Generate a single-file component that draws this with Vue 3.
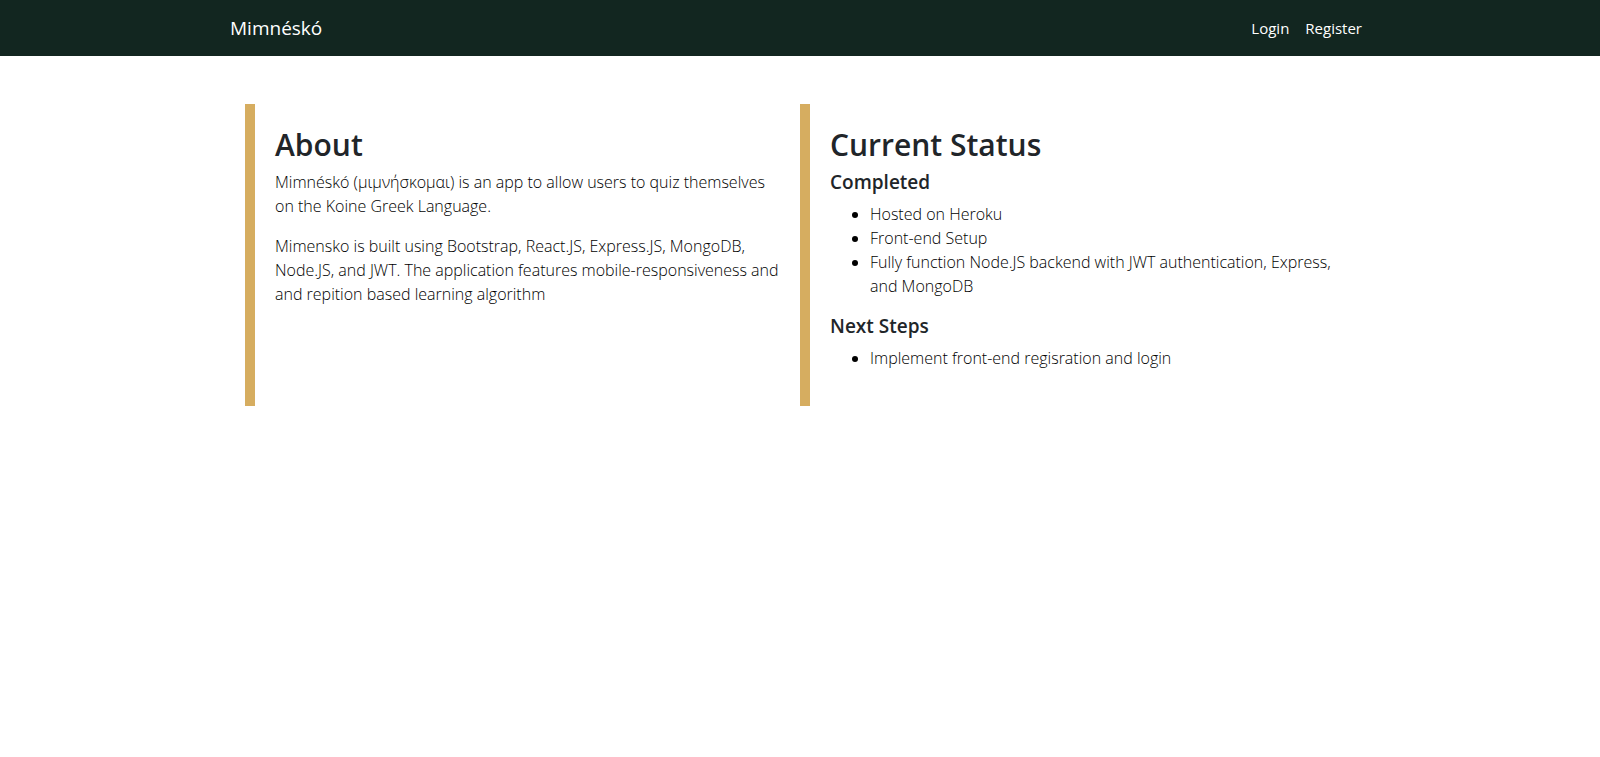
<script setup>
const completed = [
  'Hosted on Heroku',
  'Front-end Setup',
  'Fully function Node.JS backend with JWT authentication, Express, and MongoDB',
]
const nextSteps = ['Implement front-end regisration and login']
</script>

<template>
  <div class="page">
    <nav class="navbar">
      <div class="container bar">
        <a class="brand" href="#">Mimnéskó</a>
        <div class="links">
          <a href="#login">Login</a>
          <a href="#register">Register</a>
        </div>
      </div>
    </nav>
    <main class="container content">
      <section class="panel">
        <h2>About</h2>
        <p>Mimnéskó (μιμνήσκομαι) is an app to allow users to quiz themselves on the Koine Greek Language.</p>
        <p>Mimensko is built using Bootstrap, React.JS, Express.JS, MongoDB, Node.JS, and JWT. The application features mobile-responsiveness and and repition based learning algorithm</p>
      </section>
      <section class="panel">
        <h2>Current Status</h2>
        <h5>Completed</h5>
        <ul>
          <li v-for="item in completed" :key="item">{{ item }}</li>
        </ul>
        <h5>Next Steps</h5>
        <ul>
          <li v-for="item in nextSteps" :key="item">{{ item }}</li>
        </ul>
      </section>
    </main>
  </div>
</template>

<style>
body {
  margin: 0;
  background: #fff;
}
</style>

<style scoped>
.page {
  font-family: "Segoe UI", "Open Sans", "Noto Sans", sans-serif;
  font-size: 16px;
  font-weight: 300;
  line-height: 24px;
  color: #000;
}
.container {
  box-sizing: border-box;
  max-width: 1140px;
  margin: 0 auto;
}
.navbar {
  background: #122620;
  padding: 8px 16px;
}
.bar {
  display: flex;
  align-items: center;
  justify-content: space-between;
}
.navbar a {
  color: #fff;
  font-weight: 400;
  text-decoration: none;
}
.brand {
  font-size: 19px;
  line-height: 30px;
  padding: 5px 0;
}
.links {
  display: flex;
  font-size: 15px;
}
.links a {
  padding: 8px;
}
.content {
  display: grid;
  grid-template-columns: 1fr 1fr;
  margin-top: 48px;
  padding: 0 15px;
}
.panel {
  border-left: 10px solid #d6ad60;
  padding: 20px;
}
h2,
h5 {
  margin: 0 0 8px;
  font-weight: 600;
  color: #212529;
}
h2 {
  margin-bottom: 4px;
  font-size: 30px;
  line-height: 42px;
}
h5 {
  font-size: 19px;
  line-height: 24px;
}
p {
  margin: 0 0 16px;
}
ul {
  margin: 0 0 16px;
  padding-left: 40px;
}
</style>
